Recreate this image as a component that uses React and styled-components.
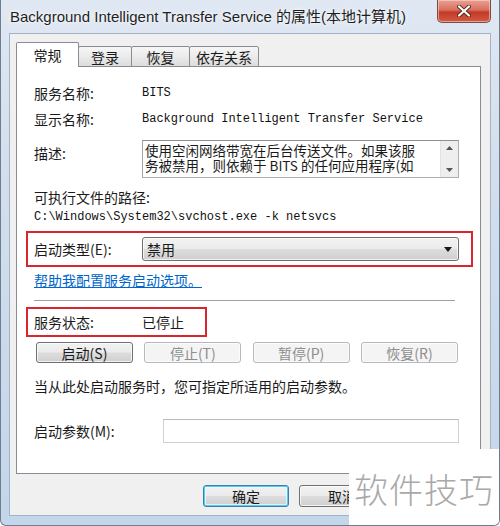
import styled, { createGlobalStyle } from "styled-components";

const GlobalStyle = createGlobalStyle`
  html, body {
    margin: 0;
    padding: 0;
    background: #ffffff;
  }
  body {
    font-family: "Noto Sans CJK SC", sans-serif;
    color: #1a1a1a;
  }
`;

const Window = styled.div`
  position: relative;
  width: 500px;
  height: 526px;
  box-sizing: border-box;
  display: flex;
  flex-direction: column;
  padding: 0 8px 9px 8px;
  background: linear-gradient(180deg, #dfe8f3 0%, #d2deec 35%, #c3d6ea 100%);
  border: 1px solid #6e7d8f;
  border-top: none;
  border-radius: 0 0 6px 6px;
  overflow: hidden;
`;

const TitleBar = styled.div`
  height: 33px;
  display: flex;
  justify-content: space-between;
  align-items: flex-start;
  flex-shrink: 0;
`;

const Title = styled.div`
  margin: 7px 0 0 1px;
  font-family: "Liberation Sans", "Noto Sans CJK SC", sans-serif;
  font-size: 15px;
  line-height: 20px;
  color: #1e1e1e;
  text-shadow: 0 0 6px rgba(255, 255, 255, 0.95), 0 0 2px rgba(255, 255, 255, 0.9);
  white-space: nowrap;
`;

const CloseButton = styled.div`
  width: 54px;
  height: 23px;
  box-sizing: border-box;
  display: flex;
  align-items: center;
  justify-content: center;
  border: 1px solid #7e4a45;
  border-top: none;
  border-radius: 0 0 5px 5px;
  background: linear-gradient(180deg, #e8a093 0%, #d9705f 45%, #c23a26 55%, #d05a44 100%);
  box-shadow: inset 0 0 0 1px rgba(255, 220, 210, 0.55);
`;

const Client = styled.div`
  flex: 1;
  display: flex;
  flex-direction: column;
  box-sizing: border-box;
  padding: 8px 9px 8px 6px;
  background: #f0f0f0;
  border: 1px solid #a3b2c4;
`;

const TabStrip = styled.div`
  position: relative;
  z-index: 1;
  display: flex;
  align-items: flex-end;
  height: 25px;
  margin-bottom: -1px;
`;

const Tab = styled.div`
  box-sizing: border-box;
  width: ${(p) => p.$width}px;
  height: ${(p) => (p.$active ? 25 : 21)}px;
  margin-right: -1px;
  display: flex;
  align-items: center;
  justify-content: center;
  padding-top: ${(p) => (p.$active ? 0 : 1)}px;
  font-size: 14px;
  color: #1a1a1a;
  border: 1px solid #898c95;
  border-bottom: ${(p) => (p.$active ? "none" : "1px solid #898c95")};
  border-radius: 2px 2px 0 0;
  background: ${(p) =>
    p.$active ? "#ffffff" : "linear-gradient(180deg, #f6f6f6 0%, #ebebeb 50%, #dcdcdc 100%)"};
  position: relative;
  z-index: ${(p) => (p.$active ? 2 : 1)};
`;

const Panel = styled.div`
  height: 408px;
  box-sizing: border-box;
  display: flex;
  flex-direction: column;
  padding: 0 21px 0 17px;
  background: #ffffff;
  border: 1px solid #898c95;
`;

const Row = styled.div`
  display: flex;
  align-items: ${(p) => (p.$top ? "flex-start" : "center")};
  min-height: 20px;
  margin-top: ${(p) => p.$mt || 0}px;
`;

const Label = styled.div`
  width: ${(p) => p.$width || 108}px;
  flex-shrink: 0;
  font-size: 14px;
  line-height: 20px;
  margin-top: ${(p) => p.$mt || 0}px;
  white-space: nowrap;
`;

const Mono = styled.div`
  font-family: "Liberation Mono", "Noto Sans CJK SC", monospace;
  font-size: 12px;
  line-height: 20px;
  white-space: nowrap;
  color: #111;
`;

const Text = styled.div`
  font-size: 14px;
  line-height: 20px;
  white-space: nowrap;
`;

const DescBox = styled.div`
  flex: 1;
  height: 38px;
  box-sizing: border-box;
  display: flex;
  border: 1px solid #abadb3;
  border-top-color: #8c8f96;
  border-left-color: #a0a3a9;
  background: #ffffff;
`;

const DescText = styled.div`
  flex: 1;
  padding: 2px 0 0 2px;
  font-size: 13.5px;
  line-height: 15px;
  white-space: nowrap;
  overflow: hidden;
`;

const ScrollBar = styled.div`
  width: 18px;
  display: flex;
  flex-direction: column;
  justify-content: space-between;
  align-items: center;
  padding: 5px 0;
  box-sizing: border-box;
  background: #eeeeee;
  border-left: 1px solid #e2e2e2;
`;

const Highlight = styled.div`
  display: flex;
  align-items: center;
  box-sizing: border-box;
  width: ${(p) => p.$width}px;
  height: ${(p) => p.$height}px;
  margin: ${(p) => p.$mt}px 0 0 -8px;
  padding: 0 12px 0 6px;
  border: 2px solid #d7262e;
`;

const Select = styled.div`
  flex: 1;
  height: 24px;
  box-sizing: border-box;
  display: flex;
  align-items: center;
  justify-content: space-between;
  padding: 0 6px 0 4px;
  font-size: 14px;
  border: 1px solid #707070;
  border-radius: 3px;
  background: linear-gradient(180deg, #f3f3f3 0%, #ebebeb 48%, #dddddd 52%, #cfcfcf 100%);
  box-shadow: inset 0 0 0 1px rgba(255, 255, 255, 0.7);
`;

const Link = styled.a`
  display: block;
  margin-top: 3px;
  font-size: 14px;
  line-height: 20px;
  color: #0066cc;
  text-decoration: underline;
  cursor: pointer;
`;

const Separator = styled.div`
  width: 421px;
  height: 1px;
  margin-top: 10px;
  background: #a0a0a0;
  border-bottom: 1px solid #ffffff;
`;

const ButtonRow = styled.div`
  display: flex;
  justify-content: space-between;
  width: 422px;
  margin: 5px 0 0 2px;
`;

const Button = styled.div`
  width: ${(p) => p.$width || 97}px;
  height: ${(p) => p.$height || 21}px;
  box-sizing: border-box;
  display: flex;
  align-items: center;
  justify-content: center;
  font-size: 14px;
  border-radius: 3px;
  color: ${(p) => (p.$disabled ? "#8d8d8d" : "#1a1a1a")};
  border: 1px solid ${(p) => (p.$disabled ? "#b5b9bd" : p.$default ? "#3c7fb1" : "#707070")};
  background: ${(p) =>
    p.$disabled
      ? "#f4f4f4"
      : "linear-gradient(180deg, #f2f2f2 0%, #ebebeb 48%, #dddddd 52%, #cfcfcf 100%)"};
  box-shadow: ${(p) =>
    p.$default
      ? "inset 0 0 0 1px #48d0f5, inset 0 0 0 2px rgba(255,255,255,0.6)"
      : "inset 0 0 0 1px rgba(255, 255, 255, 0.75)"};
`;

const Input = styled.div`
  flex: 1;
  height: 24px;
  box-sizing: border-box;
  border: 1px solid #cfd1d4;
  border-top-color: #b8babe;
  background: #ffffff;
`;

const Footer = styled.div`
  display: flex;
  justify-content: flex-end;
  gap: 10px;
  margin-top: 11px;
`;

const Watermark = styled.div`
  position: absolute;
  right: 0;
  bottom: 0;
  width: 150px;
  height: 76px;
  display: flex;
  align-items: center;
  justify-content: center;
  padding-top: 2px;
  box-sizing: border-box;
  background: #ffffff;
  font-family: "Noto Sans CJK SC", sans-serif;
  font-size: 34px;
  font-weight: 300;
  letter-spacing: 1px;
  color: #a9a9a9;
`;

const tabs = [
  { label: "常规", width: 63, active: true },
  { label: "登录", width: 54 },
  { label: "恢复", width: 59 },
  { label: "依存关系", width: 70 },
];

const actions = [
  { label: "启动(S)" },
  { label: "停止(T)", disabled: true },
  { label: "暂停(P)", disabled: true },
  { label: "恢复(R)", disabled: true },
];

export default function App() {
  return (
    <>
      <GlobalStyle />
      <Window>
        <TitleBar>
          <Title>Background Intelligent Transfer Service 的属性(本地计算机)</Title>
          <CloseButton>
            <svg width="14" height="12" viewBox="0 0 14 12">
              <path d="M2 1.5 L12 10.5 M12 1.5 L2 10.5" stroke="#5a2a24" strokeWidth="4" strokeLinecap="round" />
              <path d="M2 1.5 L12 10.5 M12 1.5 L2 10.5" stroke="#ffffff" strokeWidth="2.2" strokeLinecap="round" />
            </svg>
          </CloseButton>
        </TitleBar>

        <Client>
          <TabStrip>
            {tabs.map((t) => (
              <Tab key={t.label} $width={t.width} $active={t.active}>
                {t.label}
              </Tab>
            ))}
          </TabStrip>

          <Panel>
            <Row $mt={16}>
              <Label>服务名称:</Label>
              <Mono>BITS</Mono>
            </Row>
            <Row $mt={6}>
              <Label>显示名称:</Label>
              <Mono>Background Intelligent Transfer Service</Mono>
            </Row>
            <Row $mt={11} $top>
              <Label $mt={3}>描述:</Label>
              <DescBox>
                <DescText>
                  <div>使用空闲网络带宽在后台传送文件。如果该服</div>
                  <div>务被禁用，则依赖于 BITS 的任何应用程序(如</div>
                </DescText>
                <ScrollBar>
                  <svg width="7" height="4" viewBox="0 0 7 4">
                    <path d="M0 4 L3.5 0 L7 4 Z" fill="#555" />
                  </svg>
                  <svg width="7" height="4" viewBox="0 0 7 4">
                    <path d="M0 0 H7 L3.5 4 Z" fill="#555" />
                  </svg>
                </ScrollBar>
              </DescBox>
            </Row>
            <Text style={{ marginTop: 9 }}>可执行文件的路径:</Text>
            <Mono>C:\Windows\System32\svchost.exe -k netsvcs</Mono>

            <Highlight $width={447} $height={36} $mt={4}>
              <Label>启动类型(E):</Label>
              <Select>
                <span>禁用</span>
                <svg width="8" height="5" viewBox="0 0 8 5">
                  <path d="M0 0 H8 L4 5 Z" fill="#1a1a1a" />
                </svg>
              </Select>
            </Highlight>

            <Link>帮助我配置服务启动选项。</Link>
            <Separator />

            <Highlight $width={181} $height={30} $mt={5}>
              <Label>服务状态:</Label>
              <Text>已停止</Text>
            </Highlight>

            <ButtonRow>
              {actions.map((a) => (
                <Button key={a.label} $disabled={a.disabled}>
                  {a.label}
                </Button>
              ))}
            </ButtonRow>

            <Text style={{ marginTop: 13 }}>当从此处启动服务时，您可指定所适用的启动参数。</Text>

            <Row $mt={23}>
              <Label $width={129}>启动参数(M):</Label>
              <Input />
            </Row>
          </Panel>

          <Footer>
            <Button $width={86} $height={22} $default>确定</Button>
            <Button $width={86} $height={22}>取消</Button>
            <Button $width={86} $height={22}>应用(A)</Button>
          </Footer>
        </Client>

        <Watermark>软件技巧</Watermark>
      </Window>
    </>
  );
}
